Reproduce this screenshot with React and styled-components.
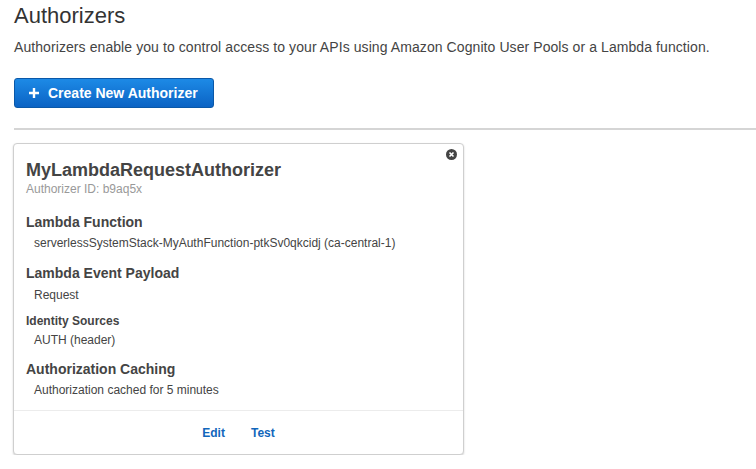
import React from "react";
import styled, { createGlobalStyle } from "styled-components";

const GlobalStyle = createGlobalStyle`
  body {
    margin: 0;
    background: #fff;
    font-family: "Liberation Sans", Arial, Helvetica, sans-serif;
    color: #444;
  }
`;

const Page = styled.div`
  padding: 3px 0 0 14px;
`;

const Title = styled.h1`
  margin: 0;
  font-size: 22px;
  font-weight: 400;
  line-height: 26px;
  color: #333;
`;

const Desc = styled.p`
  margin: 9px 0 0;
  font-size: 14px;
  line-height: 18px;
  letter-spacing: 0.08px;
  color: #444;
`;

const PrimaryButton = styled.button`
  display: flex;
  align-items: center;
  gap: 8px;
  margin-top: 22px;
  height: 30px;
  padding: 0 15px 0 13px;
  border: 1px solid #0a58a8;
  border-radius: 3px;
  background: linear-gradient(#1d8ae6, #0b63c4);
  color: #fff;
  font-family: inherit;
  font-size: 14px;
  font-weight: 700;
  cursor: pointer;
`;

const Divider = styled.hr`
  margin: 20px 0 0;
  border: 0;
  border-top: 2px solid #d5d5d5;
`;

const Card = styled.div`
  position: relative;
  width: 449px;
  margin: 13px 0 0 -1px;
  border: 1px solid #cfcfcf;
  border-radius: 4px;
  background: #fff;
  box-shadow: 0 1px 2px rgba(0, 0, 0, 0.18);
`;

const CardBody = styled.div`
  padding: 16px 12px 12px 12px;
`;

const CardTitle = styled.div`
  font-size: 18px;
  font-weight: 700;
  line-height: 20px;
  color: #444;
`;

const SubId = styled.div`
  margin-top: 1px;
  font-size: 12px;
  line-height: 16px;
  color: #999;
`;

const Label = styled.div`
  margin-top: ${({ $mt }) => $mt}px;
  font-size: ${({ $small }) => ($small ? 12 : 14)}px;
  font-weight: 700;
  line-height: ${({ $small }) => ($small ? 16 : 18)}px;
  color: #444;
`;

const Value = styled.div`
  margin-top: ${({ $mt }) => $mt}px;
  padding-left: 8px;
  font-size: 12px;
  line-height: 16px;
  color: #444;
`;

const CloseIcon = styled.svg`
  position: absolute;
  top: 5px;
  right: 6px;
`;

const Footer = styled.div`
  display: flex;
  justify-content: center;
  gap: 26px;
  padding: 14px 0 13px;
  border-top: 1px solid #ececec;
`;

const FooterLink = styled.a`
  font-size: 12px;
  font-weight: 700;
  line-height: 16px;
  color: #1166bb;
  text-decoration: none;
  cursor: pointer;
`;

const details = [
  { label: "Lambda Function", value: "serverlessSystemStack-MyAuthFunction-ptkSv0qkcidj (ca-central-1)", lt: 16, vt: 4 },
  { label: "Lambda Event Payload", value: "Request", lt: 13, vt: 5 },
  { label: "Identity Sources", value: "AUTH (header)", lt: 10, vt: 3, small: true },
  { label: "Authorization Caching", value: "Authorization cached for 5 minutes", lt: 12, vt: 4 },
];

function App() {
  return (
    <Page>
      <GlobalStyle />
      <Title>Authorizers</Title>
      <Desc>
        Authorizers enable you to control access to your APIs using Amazon Cognito User Pools or a Lambda function.
      </Desc>
      <PrimaryButton>
        <svg width="12" height="12" viewBox="0 0 12 12">
          <path d="M6 1v10M1 6h10" stroke="#fff" strokeWidth="2.4" />
        </svg>
        Create New Authorizer
      </PrimaryButton>
      <Divider />
      <Card>
        <CloseIcon width="11" height="11" viewBox="0 0 11 11">
          <circle cx="5.5" cy="5.5" r="5.5" fill="#444" />
          <path d="M3.5 3.5l4 4M7.5 3.5l-4 4" stroke="#fff" strokeWidth="1.6" />
        </CloseIcon>
        <CardBody>
          <CardTitle>MyLambdaRequestAuthorizer</CardTitle>
          <SubId>Authorizer ID: b9aq5x</SubId>
          {details.map((d) => (
            <React.Fragment key={d.label}>
              <Label $mt={d.lt} $small={d.small}>{d.label}</Label>
              <Value $mt={d.vt}>{d.value}</Value>
            </React.Fragment>
          ))}
        </CardBody>
        <Footer>
          <FooterLink>Edit</FooterLink>
          <FooterLink>Test</FooterLink>
        </Footer>
      </Card>
    </Page>
  );
}

export default App;
